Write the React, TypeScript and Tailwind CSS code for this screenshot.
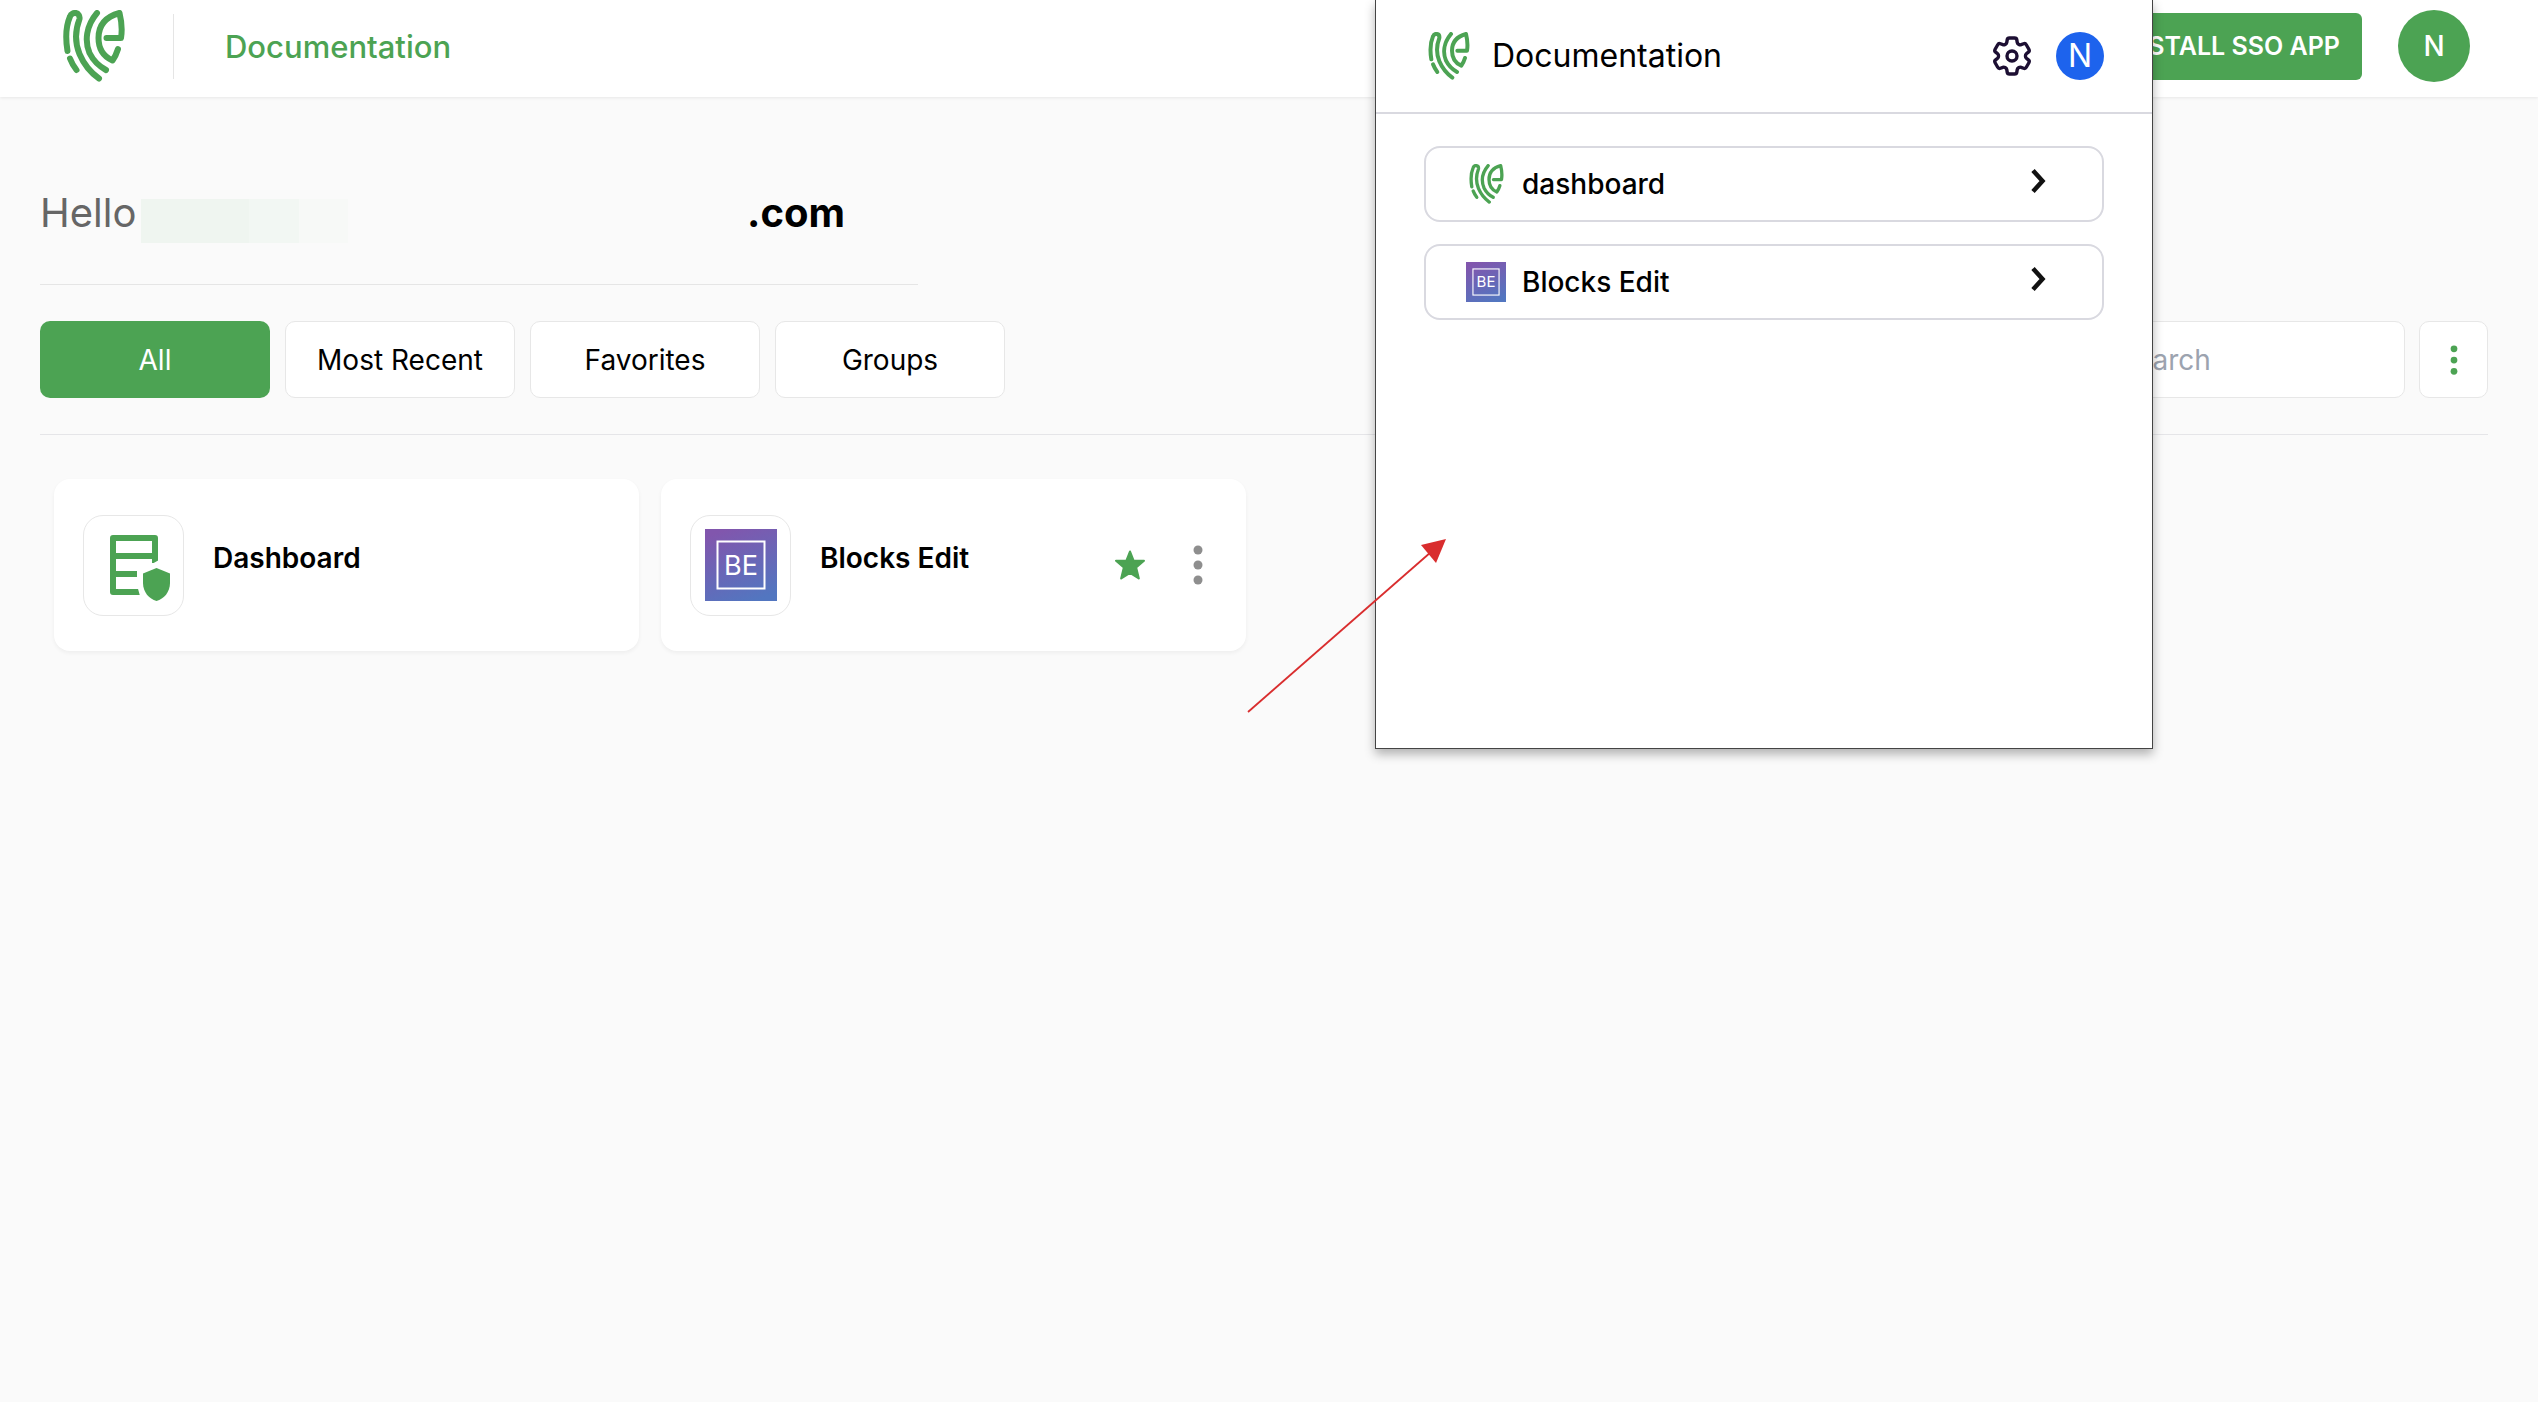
import { useState } from 'react';

const tabs = ['All', 'Most Recent', 'Favorites', 'Groups'];

function Logo({ className }: { className: string }) {
  return (
    <svg
      viewBox="0 0 62 72"
      className={className}
      fill="none"
      stroke="#4ca353"
      strokeWidth="6"
      strokeLinecap="round"
      strokeLinejoin="round"
      aria-hidden="true"
    >
      <path d="M4.500 41C2.500 29 2.500 17 7 6.500C9 1 17.500 2 16.500 9C11.500 22 12 33 16.500 44C21 54.500 27.500 62.500 36 68.500" />
      <path d="M7 48.500Q9.500 55 13.500 60" />
      <path d="M34 3C23 16 21.500 31 26.500 43Q32 54 43 60" />
      <path d="M43.500 28H58C59.500 19 58.500 11 56.500 3C42 7 35.500 16 35.500 28C35.500 39 40.500 46.500 49.500 50.500Q53 45.500 55 39" />
    </svg>
  );
}

function BlocksEditIcon({ className }: { className: string }) {
  return (
    <svg viewBox="0 0 72 72" className={className} aria-hidden="true">
      <defs>
        <linearGradient id="be-fill" x1="0.3" y1="0" x2="0.7" y2="1">
          <stop offset="0" stopColor="#8156ad" />
          <stop offset="1" stopColor="#5276c0" />
        </linearGradient>
      </defs>
      <rect width="72" height="72" fill="url(#be-fill)" />
      <rect x="12.500" y="12.500" width="47" height="47" fill="none" stroke="#fff" strokeWidth="2" />
      <text x="36" y="45.500" textAnchor="middle" fontFamily="Inter, sans-serif" fontSize="27" fill="#fff">
        BE
      </text>
    </svg>
  );
}

function ServerShieldIcon() {
  return (
    <svg viewBox="0 0 61 66" className="h-[66px] w-[61px]" fill="none" aria-hidden="true">
      <path
        d="M45 28V3H3V57H30M3 21H45M3 39H27"
        stroke="#4ca353"
        strokeWidth="6"
        strokeLinejoin="round"
      />
      <path d="M41 29.500L49 25V32H41ZM27.500 52L30 61H34V52Z" fill="#fff" />
      <path d="M46.500 33L60 38.500V48C60 57 54 64 46.500 66C39 64 33 57 33 48V38.500Z" fill="#4ca353" />
    </svg>
  );
}

function GearIcon() {
  return (
    <svg viewBox="0 0 24 24" className="h-[50px] w-12" fill="none" stroke="#1d0f33" strokeWidth="1.700" strokeLinejoin="round" aria-hidden="true">
      <path d="M9.594 3.940c.09-.542.56-.94 1.110-.94h2.593c.55 0 1.020.398 1.110.94l.213 1.281c.063.374.313.686.645.87.074.04.147.083.22.127.325.196.72.257 1.075.124l1.217-.456a1.125 1.125 0 0 1 1.370.49l1.296 2.247a1.125 1.125 0 0 1-.26 1.431l-1.003.827c-.293.241-.438.613-.43.992a7.723 7.723 0 0 1 0 .255c-.008.378.137.75.43.991l1.004.827c.424.35.534.955.26 1.430l-1.298 2.247a1.125 1.125 0 0 1-1.369.491l-1.217-.456c-.355-.133-.75-.072-1.076.124a6.470 6.470 0 0 1-.22.128c-.331.183-.581.495-.644.869l-.213 1.281c-.09.543-.56.940-1.110.940h-2.594c-.55 0-1.019-.398-1.110-.940l-.213-1.281c-.062-.374-.312-.686-.644-.870a6.520 6.520 0 0 1-.22-.127c-.325-.196-.72-.257-1.076-.124l-1.217.456a1.125 1.125 0 0 1-1.369-.490l-1.297-2.247a1.125 1.125 0 0 1 .26-1.431l1.004-.827c.292-.240.437-.613.430-.991a6.932 6.932 0 0 1 0-.255c.007-.380-.138-.751-.430-.992l-1.004-.827a1.125 1.125 0 0 1-.26-1.430l1.297-2.247a1.125 1.125 0 0 1 1.370-.491l1.216.456c.356.133.751.072 1.076-.124.072-.044.146-.086.220-.128.332-.183.582-.495.644-.869l.214-1.280Z" />
      <circle cx="12" cy="12" r="2.500" />
    </svg>
  );
}

function Chevron() {
  return (
    <svg viewBox="0 0 16 26" className="mb-1.5 h-[26px] w-4" fill="none" stroke="#111" strokeWidth="4.500" aria-hidden="true">
      <path d="M3 2.500L12.500 13L3 23.500" />
    </svg>
  );
}

function Dots({ className }: { className: string }) {
  return (
    <svg viewBox="0 0 10 40" className={className} fill="currentColor" aria-hidden="true">
      <circle cx="5" cy="5" r="4.500" />
      <circle cx="5" cy="20" r="4.500" />
      <circle cx="5" cy="35" r="4.500" />
    </svg>
  );
}

function Header() {
  return (
    <header className="flex h-[97px] items-start bg-white pr-[68px] pl-[63px] shadow-[0_1px_3px_rgba(0,0,0,0.08)]">
      <Logo className="mt-2.5 h-[72px] w-[62px]" />
      <div className="mt-3.5 ml-12 h-[65px] w-px bg-[#e5e5e5]" />
      <h1 className="mt-[27px] ml-[51px] text-[31px] leading-10 font-medium text-[#4ca353]">Documentation</h1>
      <button className="mt-[13px] ml-auto h-[67px] rounded-md bg-[#4ca353] px-[22px] text-[25px] font-semibold text-white">
        INSTALL SSO APP
      </button>
      <button className="mt-2.5 ml-9 size-[72px] rounded-full bg-[#4ca353] text-[28px] font-medium text-white">N</button>
    </header>
  );
}

function Greeting() {
  return (
    <div className="flex h-[188px] w-[878px] items-center border-b border-[#e5e5e5] pt-11">
      <span className="w-[101px] text-[40px] leading-[56px] text-[#666]">Hello</span>
      <div className="mt-4 flex h-11">
        <span className="w-[108px] bg-[#eff5f0]" />
        <span className="w-[50px] bg-[#f2f7f3]" />
        <span className="w-[49px] bg-[#f7f9f7]" />
      </div>
      <span className="ml-auto pr-[73px] text-[40px] leading-[56px] font-bold text-black">.com</span>
    </div>
  );
}

function Toolbar() {
  const [active, setActive] = useState('All');

  return (
    <div className="flex border-b border-[#e5e5e8] py-9">
      <div className="flex gap-[15px]">
        {tabs.map((tab) => (
          <button
            key={tab}
            onClick={() => setActive(tab)}
            className={
              tab === active
                ? 'h-[77px] w-[230px] rounded-[10px] bg-[#4ca353] text-[28px] text-white'
                : 'h-[77px] w-[230px] rounded-[10px] border border-[#e7e7e7] bg-white text-[28px] text-black'
            }
          >
            {tab}
          </button>
        ))}
      </div>
      <input
        type="search"
        aria-label="Search"
        placeholder="Search"
        className="ml-auto h-[77px] w-[328px] rounded-[10px] border border-[#e7e7e7] bg-white px-10 text-[28px] placeholder:text-[#9ca3af]"
      />
      <button
        aria-label="More options"
        className="ml-3.5 flex h-[77px] w-[69px] items-center justify-center rounded-[10px] border border-[#e7e7e7] bg-white text-[#4ca353]"
      >
        <Dots className="h-[30px] w-2" />
      </button>
    </div>
  );
}

function AppCards() {
  return (
    <div className="flex gap-[22px] px-3.5 pt-11">
      <article className="flex h-[172px] w-[585px] items-center rounded-2xl bg-white px-[29px] shadow-[0_2px_4px_rgba(0,0,0,0.05)]">
        <div className="flex size-[101px] items-center justify-center rounded-[20px] border border-[#e7e7e7] pt-1.5 pl-3.5">
          <ServerShieldIcon />
        </div>
        <h2 className="mb-3.5 ml-[29px] text-[28px] leading-9 font-semibold text-black">Dashboard</h2>
      </article>
      <article className="flex h-[172px] w-[585px] items-center rounded-2xl bg-white px-[29px] shadow-[0_2px_4px_rgba(0,0,0,0.05)]">
        <div className="flex size-[101px] items-center justify-center rounded-[20px] border border-[#e7e7e7]">
          <BlocksEditIcon className="size-[72px]" />
        </div>
        <h2 className="mb-3.5 ml-[29px] text-[28px] leading-9 font-semibold text-black">Blocks Edit</h2>
        <button aria-label="Remove from favorites" className="ml-auto">
          <svg viewBox="0 0 28 28" className="size-[30px]" fill="#4ca353" stroke="#4ca353" strokeWidth="2" strokeLinejoin="round" aria-hidden="true">
            <path d="M14 1.500L17.300 10H27L19.700 16.300L22.200 26.500L14 21.300L5.800 26.500L8.300 16.300L1 10H10.700Z" />
          </svg>
        </button>
        <button aria-label="Blocks Edit options" className="mr-[14px] ml-12 text-[#8e8e8e]">
          <Dots className="h-10 w-2.5" />
        </button>
      </article>
    </div>
  );
}

function ExtensionPopup() {
  return (
    <aside className="absolute top-0 right-[385px] min-h-[749px] w-[778px] border-x border-b border-[#444] bg-white shadow-[0_5px_10px_rgba(0,0,0,0.3)]">
      <div className="flex h-[114px] items-center border-b-2 border-[#d9d9e0] pr-12 pl-[52px]">
        <Logo className="h-12 w-[42px]" />
        <h2 className="ml-[22px] text-[32px] leading-10 text-black">Documentation</h2>
        <button aria-label="Settings" className="ml-auto">
          <GearIcon />
        </button>
        <button className="ml-5 size-12 rounded-full bg-[#1d63ed] text-[32px] leading-[48px] text-white">N</button>
      </div>
      <nav className="flex flex-col gap-[22px] px-12 pt-8">
        <a href="#dashboard" className="flex h-[76px] items-center rounded-2xl border-2 border-[#d9d9e0] pr-14 pl-10">
          <span className="flex w-10 justify-center">
            <Logo className="h-10 w-[35px]" />
          </span>
          <span className="ml-4 flex-1 text-[28px] leading-9 font-medium text-black">dashboard</span>
          <Chevron />
        </a>
        <a href="#blocks-edit" className="flex h-[76px] items-center rounded-2xl border-2 border-[#d9d9e0] pr-14 pl-10">
          <BlocksEditIcon className="size-10" />
          <span className="ml-4 flex-1 text-[28px] leading-9 font-medium text-black">Blocks Edit</span>
          <Chevron />
        </a>
      </nav>
    </aside>
  );
}

function PointerArrow() {
  return (
    <svg viewBox="0 0 200 176" className="pointer-events-none absolute top-[538px] right-[1091px] h-[176px] w-[200px]" aria-hidden="true">
      <path d="M1 174L184 14" stroke="#d92d2e" strokeWidth="1.800" />
      <path d="M199 1L174 7L189 25Z" fill="#d92d2e" />
    </svg>
  );
}

export default function App() {
  return (
    <div className="relative min-h-screen bg-[#fafafa] font-['Inter',sans-serif]">
      <Header />
      <main className="pr-[50px] pl-10">
        <Greeting />
        <Toolbar />
        <AppCards />
      </main>
      <ExtensionPopup />
      <PointerArrow />
    </div>
  );
}
